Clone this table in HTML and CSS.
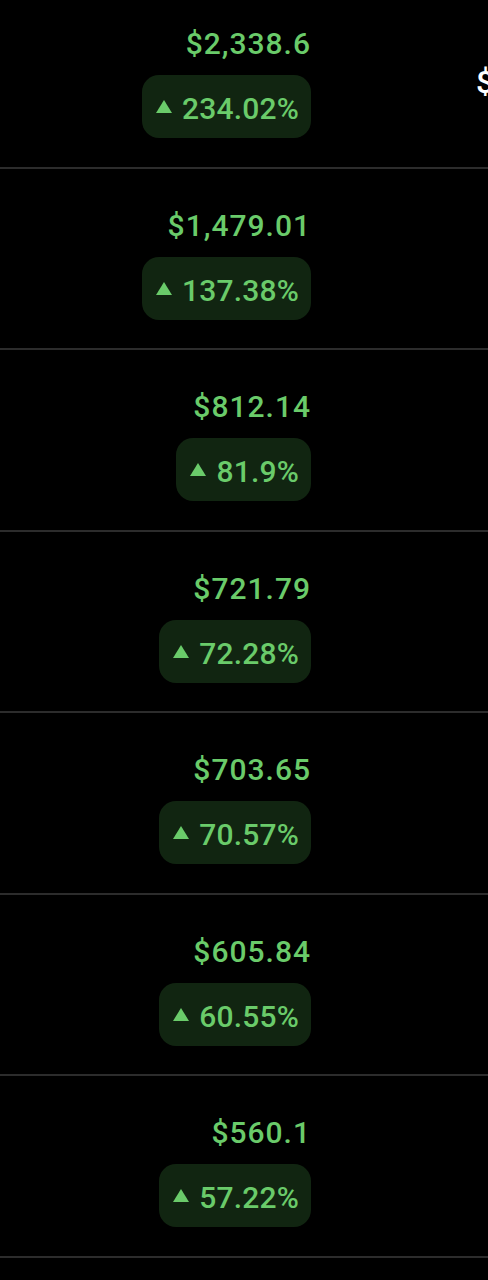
FILE: index.html
```html
<!DOCTYPE html>
<html>
<head>
<meta charset="utf-8">
<link rel="stylesheet" href="styles.css">
</head>
<body>
<div class="list">
  <div class="row">
    <div class="cell">
      <div class="price">$2,338.6</div>
      <div class="pill"><span class="tri"></span><span class="pct">234.02%</span></div>
    </div>
    <div class="next">$</div>
  </div>
  <div class="row">
    <div class="cell">
      <div class="price">$1,479.01</div>
      <div class="pill"><span class="tri"></span><span class="pct">137.38%</span></div>
    </div>
  </div>
  <div class="row">
    <div class="cell">
      <div class="price">$812.14</div>
      <div class="pill"><span class="tri"></span><span class="pct">81.9%</span></div>
    </div>
  </div>
  <div class="row">
    <div class="cell">
      <div class="price">$721.79</div>
      <div class="pill"><span class="tri"></span><span class="pct">72.28%</span></div>
    </div>
  </div>
  <div class="row">
    <div class="cell">
      <div class="price">$703.65</div>
      <div class="pill"><span class="tri"></span><span class="pct">70.57%</span></div>
    </div>
  </div>
  <div class="row">
    <div class="cell">
      <div class="price">$605.84</div>
      <div class="pill"><span class="tri"></span><span class="pct">60.55%</span></div>
    </div>
  </div>
  <div class="row">
    <div class="cell">
      <div class="price">$560.1</div>
      <div class="pill"><span class="tri"></span><span class="pct">57.22%</span></div>
    </div>
  </div>
  <div class="row">
    <div class="cell"></div>
  </div>
</div>
</body>
</html>
```
FILE: styles.css
```css
html, body {
  margin: 0;
  padding: 0;
  background: #000;
  overflow: hidden;
  height: 1280px;
  width: 488px;
}
body {
  font-family: Roboto, "Noto Sans", sans-serif;
}
.list {
  margin-top: -13px;
}
.row {
  box-sizing: border-box;
  height: 181.5px;
  border-bottom: 2px solid #2c2c2c;
  display: flex;
  align-items: flex-start;
  overflow: hidden;
}
.cell {
  width: 311px;
  flex: none;
  display: flex;
  flex-direction: column;
  align-items: flex-end;
  padding-top: 40px;
  gap: 14px;
}
.price {
  color: #6acb6a;
  font-size: 30px;
  font-weight: 500;
  line-height: 34px;
  letter-spacing: 1px;
}
.pill {
  display: flex;
  align-items: center;
  height: 63px;
  box-sizing: border-box;
  padding: 5px 12px 0 14px;
  background: #112511;
  border-radius: 17px;
  gap: 10px;
}
.tri {
  width: 0;
  height: 0;
  border-left: 8px solid transparent;
  border-right: 8px solid transparent;
  border-bottom: 13px solid #6acb6a;
  margin-bottom: 5px;
}
.pct {
  color: #6acb6a;
  font-size: 30px;
  font-weight: 500;
  line-height: 34px;
  letter-spacing: 0.2px;
}
.next {
  margin-left: 165px;
  padding-top: 75px;
  color: #fff;
  font-size: 32px;
  font-weight: 500;
  line-height: 40px;
  white-space: nowrap;
}
```
